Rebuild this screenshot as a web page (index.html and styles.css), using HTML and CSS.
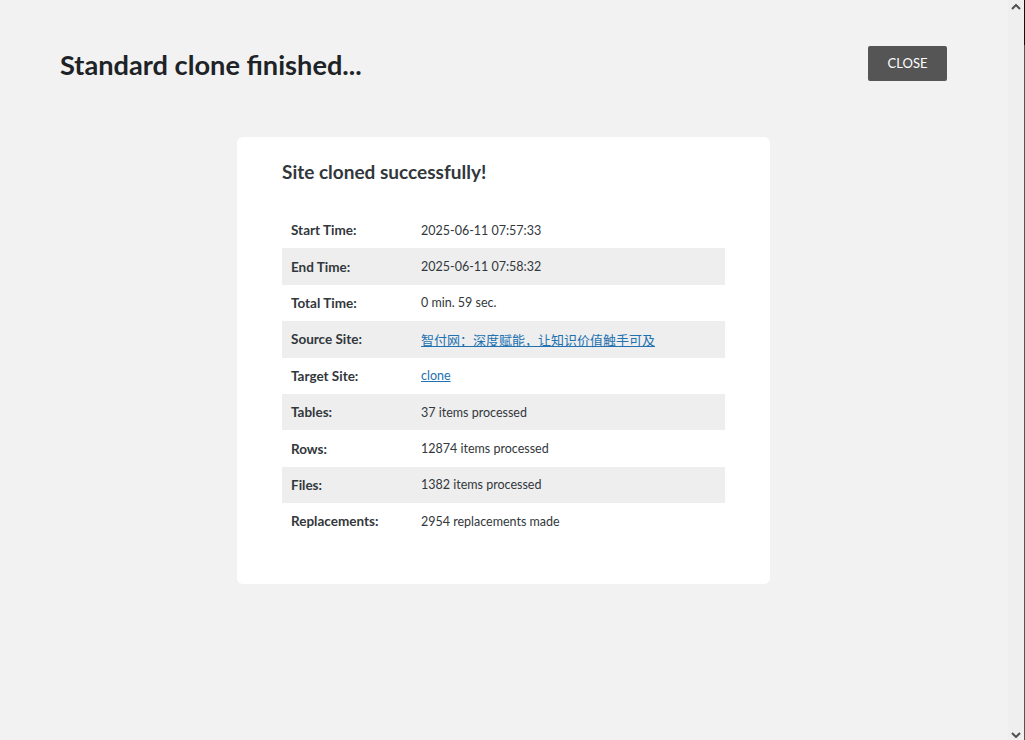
FILE: index.html
```html
<!DOCTYPE html>
<html lang="en">
<head>
<meta charset="utf-8">
<title>Standard clone finished...</title>
<link rel="stylesheet" href="styles.css">
</head>
<body>
<div class="frame">
  <main class="main">
    <header class="topbar">
      <h1 class="title">Standard clone finished...</h1>
      <button class="close-btn" type="button">Close</button>
    </header>
    <section class="card">
      <h2 class="card-title">Site cloned successfully!</h2>
      <table class="report">
        <tbody>
          <tr><th>Start Time:</th><td>2025-06-11 07:57:33</td></tr>
          <tr class="alt"><th>End Time:</th><td>2025-06-11 07:58:32</td></tr>
          <tr><th>Total Time:</th><td>0 min. 59 sec.</td></tr>
          <tr class="alt"><th>Source Site:</th><td><a class="cjk" href="#">智付网：深度赋能，让知识价值触手可及</a></td></tr>
          <tr><th>Target Site:</th><td><a href="#">clone</a></td></tr>
          <tr class="alt"><th>Tables:</th><td>37 items processed</td></tr>
          <tr><th>Rows:</th><td>12874 items processed</td></tr>
          <tr class="alt"><th>Files:</th><td>1382 items processed</td></tr>
          <tr><th>Replacements:</th><td>2954 replacements made</td></tr>
        </tbody>
      </table>
    </section>
  </main>
  <div class="scrollbar" aria-hidden="true">
    <svg class="arrow" width="10" height="6" viewBox="0 0 10 6"><path d="M1 5 L5 1 L9 5" fill="none" stroke="#505050" stroke-width="2"/></svg>
    <div class="track"></div>
    <svg class="arrow" width="10" height="6" viewBox="0 0 10 6"><path d="M1 1 L5 5 L9 1" fill="none" stroke="#505050" stroke-width="2"/></svg>
  </div>
</div>
</body>
</html>
```

FILE: styles.css
```css
html, body {
  margin: 0;
  padding: 0;
  height: 100%;
  overflow: hidden;
}

body {
  background: #f2f2f2;
  font-family: "Lato", "Noto Sans CJK SC", sans-serif;
  color: #1d2327;
}

.frame {
  display: flex;
  height: 740px;
}

.main {
  flex: 1;
  display: flex;
  flex-direction: column;
  align-items: center;
  padding-right: 1px;
}

.topbar {
  align-self: stretch;
  display: flex;
  justify-content: space-between;
  align-items: center;
  padding: 46px 60px 0 60px;
  height: 35px;
}

.title {
  margin: 2px 0 0;
  font-size: 27.2px;
  font-weight: 700;
  letter-spacing: 0;
  color: #1d2327;
}

.close-btn {
  width: 79px;
  height: 35px;
  border: none;
  border-radius: 2px;
  background: #555555;
  color: #ffffff;
  font-family: "Lato", sans-serif;
  font-size: 13px;
  text-transform: uppercase;
  padding: 0 0 2px;
}

.card {
  margin-top: 56px;
  width: 443px;
  padding: 21px 45px 44px;
  background: #ffffff;
  border-radius: 6px;
}

.card-title {
  margin: 0 0 26px;
  font-size: 19px;
  font-weight: 700;
  line-height: 28px;
  color: #32373c;
}

.report {
  width: 443px;
  border-collapse: collapse;
  font-size: 12.5px;
  color: #32373c;
}

.report th,
.report td {
  height: 36.4px;
  padding: 0 9px;
  text-align: left;
  vertical-align: middle;
}

.report th {
  width: 112px;
  font-size: 13.5px;
  font-weight: 700;
}

.report tr.alt {
  background: #eeeeee;
}

.report a {
  color: #2271b1;
  text-decoration: underline;
}

.report a.cjk {
  font-size: 13px;
}

.scrollbar {
  width: 17px;
  background: #efefef;
  border-right: 1px solid #555555;
  box-sizing: border-box;
  display: flex;
  flex-direction: column;
  align-items: center;
  padding: 4px 0 2px;
  position: relative;
}

.scrollbar::after {
  content: "";
  position: absolute;
  right: -1px;
  top: 0;
  width: 1px;
  height: 45px;
  background: #111111;
}

.track {
  flex: 1;
}
```
